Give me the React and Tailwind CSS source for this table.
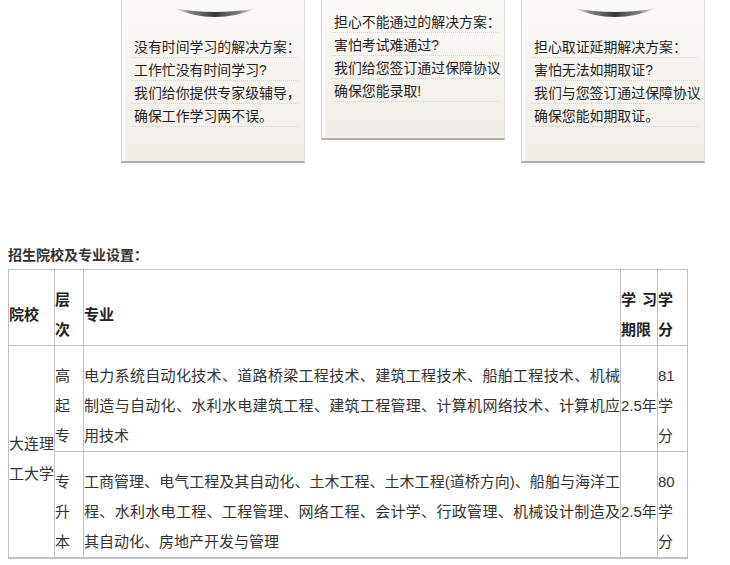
import React from "react";

const FONT = "font-['Liberation_Sans','Noto_Sans_CJK_SC',sans-serif]";

function Arc() {
  return (
    <svg
      className="absolute left-[50px] top-[7px]"
      width="86"
      height="14"
      viewBox="0 0 86 14"
    >
      <defs>
        <linearGradient id="arcg" x1="0" y1="0" x2="1" y2="0">
          <stop offset="0" stopColor="#9a9a9a" stopOpacity="0" />
          <stop offset="0.2" stopColor="#6e6e6e" stopOpacity="0.85" />
          <stop offset="0.5" stopColor="#383838" stopOpacity="1" />
          <stop offset="0.8" stopColor="#6e6e6e" stopOpacity="0.85" />
          <stop offset="1" stopColor="#9a9a9a" stopOpacity="0" />
        </linearGradient>
      </defs>
      <path d="M1 1 Q43 19 85 1 Q43 9 1 1 Z" fill="url(#arcg)" />
    </svg>
  );
}

function Card({ lines, height, pt, arc }) {
  return (
    <div
      className={`relative w-[184px] shrink-0 border-l border-r border-b-2 border-l-[#cfcecb] border-r-[#e2e0db] border-b-[#b3b1a6] bg-gradient-to-b from-[#fbfaf8] via-[#f6f4ef] to-[#f2efe9] shadow-[inset_3px_0_0_#ffffff] ${height} ${pt}`}
    >
      {arc && <Arc />}
      <div className="ml-[9px] w-[167px]">
        {lines.map((l, i) => (
          <div
            key={i}
            className="h-[23px] border-b border-dotted border-[#d6d3cc] pl-[3px] pt-[2px] text-[13.9px] leading-[20px] whitespace-nowrap text-[#1e1e1e]"
          >
            {l}
          </div>
        ))}
      </div>
    </div>
  );
}

const cell =
  "border-r border-b border-[#c0c0c0] pt-[15px] px-0 pb-0 align-middle";

export default function App() {
  return (
    <div className={`w-[730px] h-[565px] overflow-hidden bg-white ${FONT}`}>
      <div className="flex items-start gap-[16px] pl-[121px] h-[163px]">
        <Card
          arc
          height="h-[163px]"
          pt="pt-[35px]"
          lines={[
            "没有时间学习的解决方案：",
            "工作忙没有时间学习?",
            "我们给你提供专家级辅导，",
            "确保工作学习两不误。",
          ]}
        />
        <Card
          height="h-[140px]"
          pt="pt-[10px]"
          lines={[
            "担心不能通过的解决方案：",
            "害怕考试难通过?",
            "我们给您签订通过保障协议",
            "确保您能录取!",
          ]}
        />
        <Card
          arc
          height="h-[163px]"
          pt="pt-[35px]"
          lines={[
            "担心取证延期解决方案：",
            "害怕无法如期取证?",
            "我们与您签订通过保障协议",
            "确保您能如期取证。",
          ]}
        />
      </div>

      <div className="mt-[82px] pl-[8px] text-[14px] leading-[20px] font-bold text-[#333]">
        招生院校及专业设置：
      </div>

      <table className="ml-[8px] mt-[4px] w-[680px] table-fixed border-separate border-spacing-0 border-l border-t border-b border-[#c0c0c0] text-[15px] leading-[30px] text-[#333]">
        <colgroup>
          <col className="w-[46px]" />
          <col className="w-[29px]" />
          <col className="w-[537px]" />
          <col className="w-[37px]" />
          <col className="w-[30px]" />
        </colgroup>
        <tbody>
          <tr className="font-bold text-[#222]">
            <td className={`${cell} text-left`}>院校</td>
            <td className={`${cell} text-left`}>层次</td>
            <td className={`${cell} text-left`}>专业</td>
            <td className={`${cell} text-justify`}>学习期限</td>
            <td className={`${cell} text-left`}>学分</td>
          </tr>
          <tr>
            <td rowSpan={2} className={`${cell} text-left`}>
              大连理工大学
            </td>
            <td className={`${cell} text-left`}>高起专</td>
            <td className={`${cell} text-justify`}>
              电力系统自动化技术、道路桥梁工程技术、建筑工程技术、船舶工程技术、机械制造与自动化、水利水电建筑工程、建筑工程管理、计算机网络技术、计算机应用技术
            </td>
            <td className={`${cell} whitespace-nowrap text-left`}>2.5年</td>
            <td className={`${cell} text-left`}>81学分</td>
          </tr>
          <tr>
            <td className={`${cell} text-left`}>专升本</td>
            <td className={`${cell} text-justify`}>
              工商管理、电气工程及其自动化、土木工程、土木工程(道桥方向)、船舶与海洋工程、水利水电工程、工程管理、网络工程、会计学、行政管理、机械设计制造及其自动化、房地产开发与管理
            </td>
            <td className={`${cell} whitespace-nowrap text-left`}>2.5年</td>
            <td className={`${cell} text-left`}>80学分</td>
          </tr>
        </tbody>
      </table>
    </div>
  );
}
